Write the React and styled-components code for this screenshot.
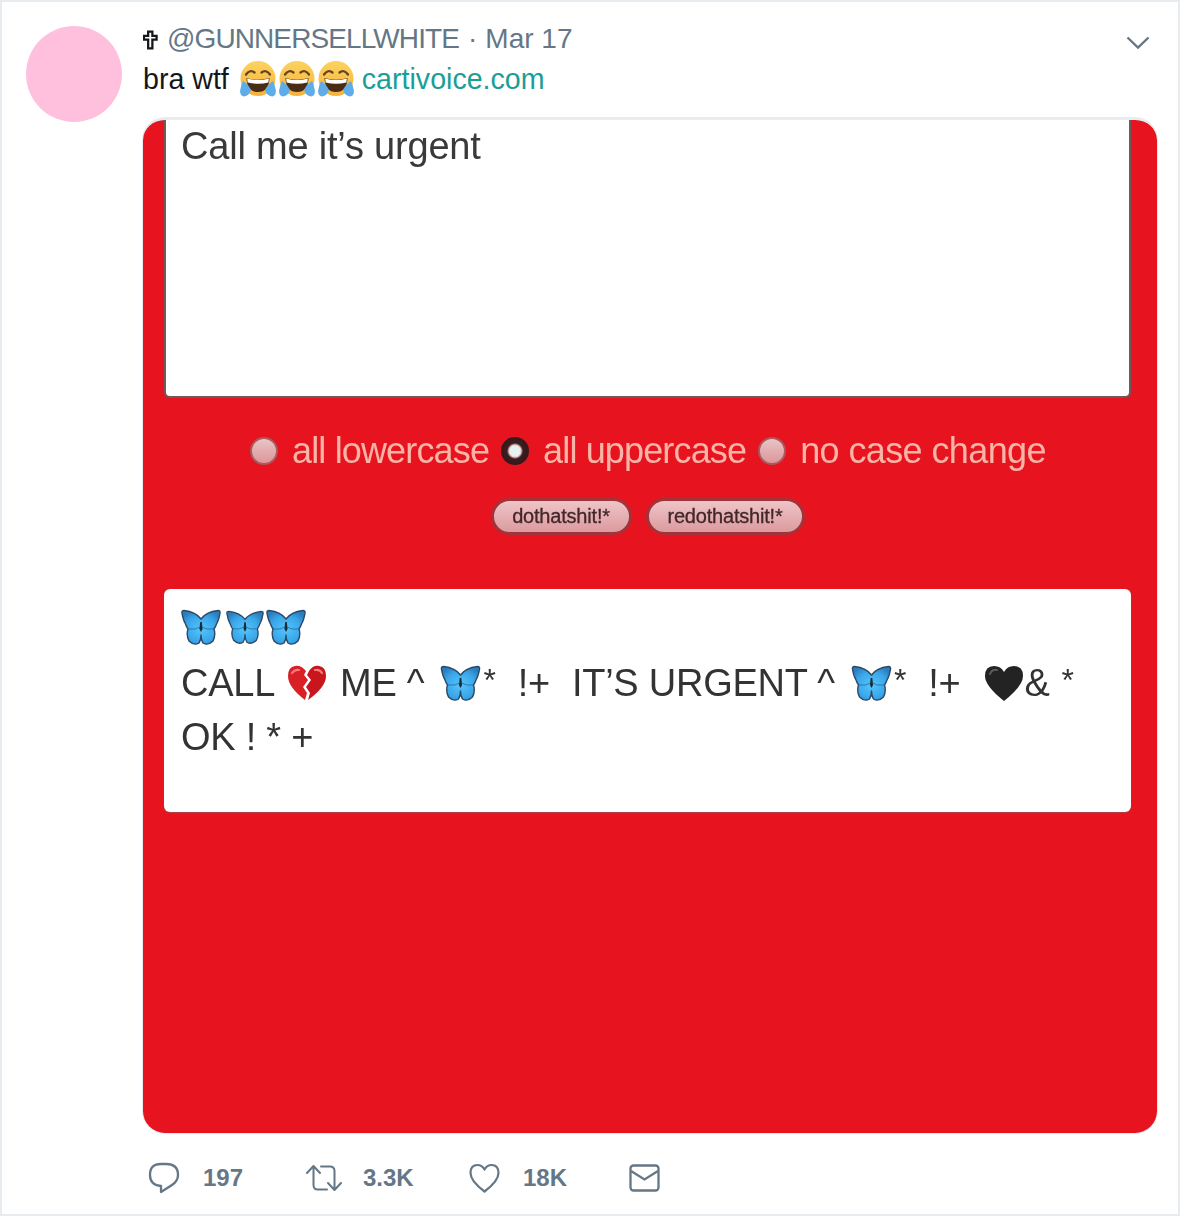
import React from 'react';
import styled, { createGlobalStyle } from 'styled-components';

const GlobalStyle = createGlobalStyle`
  html, body {
    margin: 0;
    padding: 0;
    background: #fff;
  }
  * {
    box-sizing: border-box;
  }
`;

const Joy = ({ id }) => (
  <EmojiSvg $w={36} $h={36} $mr={3} viewBox="0 0 36 36">
    <defs>
      <linearGradient id={id} x1="0" y1="0" x2="0" y2="1">
        <stop offset="0" stopColor="#fcd35f" />
        <stop offset="1" stopColor="#f5b23c" />
      </linearGradient>
    </defs>
    <circle cx="18" cy="17.5" r="17.5" fill={`url(#${id})`} />
    <path d="M6 13.5 Q10 8 14.5 11.5" fill="none" stroke="#664421" strokeWidth="2.3" strokeLinecap="round" />
    <path d="M21.5 11.5 Q26 8 30 13.5" fill="none" stroke="#664421" strokeWidth="2.3" strokeLinecap="round" />
    <path d="M6.5 17 Q18 20.5 29.5 17 Q29 31 18 31 Q7 31 6.5 17 Z" fill="#4a2c14" />
    <path d="M7.2 17.4 Q18 20.8 28.8 17.4 L28.4 21.5 Q18 24 7.6 21.5 Z" fill="#fff" />
    <path d="M3 20 Q8 23 11 29 Q9 35 3.5 35.5 Q-0.5 34 0.2 29 Q1 24 3 20 Z" fill="#5fade8" />
    <path d="M33 20 Q28 23 25 29 Q27 35 32.5 35.5 Q36.5 34 35.8 29 Q35 24 33 20 Z" fill="#5fade8" />
  </EmojiSvg>
);

const Butterfly = ({ id, w = 40, h = 36, mr = 0 }) => (
  <EmojiSvg $w={w} $h={h} $mr={mr} viewBox="0 0 40 36">
    <defs>
      <radialGradient id={id} cx="0.5" cy="0.55" r="0.6">
        <stop offset="0" stopColor="#54c6fa" />
        <stop offset="0.65" stopColor="#3aa6ea" />
        <stop offset="1" stopColor="#2b7dbd" />
      </radialGradient>
    </defs>
    <path
      d="M3 1.5 Q15 3 20 10 Q25 3 37 1.5 Q39.5 1.5 39 4 Q38 11 35.5 15 Q34.5 18 33 20 Q35 26 32 32 Q27 37 22 34 Q20 31 20 26 Q20 31 18 34 Q13 37 8 32 Q5 26 7 20 Q5.5 18 4.5 15 Q2 11 1 4 Q0.5 1.5 3 1.5 Z"
      fill={`url(#${id})`}
      stroke="#2b4a66"
      strokeWidth="1.4"
      strokeLinejoin="round"
    />
    <path d="M19.2 13 h1.6 l0.8 7 l-1.6 3 l-1.6 -3 Z" fill="#1a2c3c" />
    <path d="M7 20 Q15 21 19 18 M33 20 Q25 21 21 18" fill="none" stroke="#23689c" strokeWidth="0.8" />
  </EmojiSvg>
);

const BrokenHeart = () => (
  <EmojiSvg $w={40} $h={36} $mr={13} viewBox="0 0 40 36">
    <path d="M19 6 Q14 0 8 1 Q1 2 1 11 Q1 22 18 35 L20 28 L16 22 L21 15 L17 10 Z" fill="#d92027" />
    <path d="M22 6 Q26 0 32 1 Q39 2 39 11 Q39 22 21 35 L23 28 L19 22 L24 15 L20 10 Z" fill="#c9161d" />
    <path d="M5 8 Q8 4 12 5" fill="none" stroke="#f47b7b" strokeWidth="2.2" strokeLinecap="round" />
    <path d="M28 5 Q33 4 35 8" fill="none" stroke="#f47b7b" strokeWidth="2.2" strokeLinecap="round" />
  </EmojiSvg>
);

const BlackHeart = () => (
  <EmojiSvg $w={40} $h={37} viewBox="0 0 40 37">
    <path d="M20 36 Q1 21 1 11 Q1 1 10 1 Q17 1 20 7 Q23 1 30 1 Q39 1 39 11 Q39 21 20 36 Z" fill="#232323" />
    <path d="M6 9 Q8 4 13 5" fill="none" stroke="#5b5b5b" strokeWidth="2" strokeLinecap="round" />
  </EmojiSvg>
);

const Radio = ({ checked }) => <RadioDot $checked={checked} />;

const App = () => (
  <Frame>
    <GlobalStyle />
    <Avatar />
    <Body>
      <TopLine>
        <CrossIcon viewBox="0 0 16 20">
          <path
            d="M5.5 1 H10 V5.5 H14.5 V9.5 H10 V19 H5.5 V9.5 H1 V5.5 H5.5 Z"
            fill="#fff"
            stroke="#14171a"
            strokeWidth="2.4"
          />
        </CrossIcon>
        <Handle>@GUNNERSELLWHITE</Handle>
        <Dot>·</Dot>
        <span>Mar 17</span>
        <Chevron viewBox="0 0 24 14">
          <path d="M1.5 1.5 L12 11.5 L22.5 1.5" fill="none" stroke="#657786" strokeWidth="2.4" />
        </Chevron>
      </TopLine>
      <TweetText>
        <span>bra wtf</span>
        <JoyRow>
          <Joy id="joy1" />
          <Joy id="joy2" />
          <Joy id="joy3" />
        </JoyRow>
        <Link>cartivoice.com</Link>
      </TweetText>

      <Media>
        <InputPanel>
          <InputText>Call me it’s urgent</InputText>
        </InputPanel>

        <Options>
          <Radio />
          <OptionLabel>all lowercase</OptionLabel>
          <Radio checked />
          <OptionLabel>all uppercase</OptionLabel>
          <Radio />
          <OptionLabel $wide>no case change</OptionLabel>
        </Options>

        <Buttons>
          <PillButton $w={141}>dothatshit!*</PillButton>
          <PillButton $w={159}>redothatshit!*</PillButton>
        </Buttons>

        <OutputPanel>
          <ButterflyRow>
            <Butterfly id="b1" w={40} h={36} mr={5} />
            <Butterfly id="b2" w={38} h={36} mr={2} />
            <Butterfly id="b3" w={40} h={36} />
          </ButterflyRow>
          <OutputLine>
            <Gap $w={12}>CALL</Gap>
            <BrokenHeart />
            <Gap $w={16}>ME ^</Gap>
            <Butterfly id="b4" w={41} h={36} />
            <Star $mr={22}>*</Star>
            <Gap $w={22}>!+</Gap>
            <Gap $w={16}>IT’S URGENT ^</Gap>
            <Butterfly id="b5" w={41} h={36} />
            <Star $mr={22}>*</Star>
            <Gap $w={24}>!+</Gap>
            <BlackHeart />
            <Gap $w={10}>&amp;</Gap>
            <Star>*</Star>
          </OutputLine>
          <OutputLine>OK ! * +</OutputLine>
        </OutputPanel>
      </Media>

      <Actions>
        <Action $w={158} $gap={23}>
          <ActionIcon $w={32} $h={32} viewBox="0 0 32 32">
            <path
              d="M13 2 H18 Q30 2 30 13 Q30 19 24 23 L13 30 V24 Q2 23 2 13 Q2 2 13 2 Z"
              fill="none"
              stroke="#657786"
              strokeWidth="2.3"
              strokeLinejoin="round"
            />
          </ActionIcon>
          <Count>197</Count>
        </Action>
        <Action $w={163} $gap={21}>
          <ActionIcon $w={36} $h={28} viewBox="0 0 36 28">
            <path
              d="M1 9 L7.5 2 L14 9 M7.5 2.5 V21 Q7.5 25.5 12 25.5 H21"
              fill="none"
              stroke="#657786"
              strokeWidth="2"
              strokeLinecap="round"
              strokeLinejoin="round"
            />
            <path
              d="M35 19 L28.5 26 L22 19 M28.5 25.5 V7 Q28.5 2.5 24 2.5 H15"
              fill="none"
              stroke="#657786"
              strokeWidth="2"
              strokeLinecap="round"
              strokeLinejoin="round"
            />
          </ActionIcon>
          <Count>3.3K</Count>
        </Action>
        <Action $w={160} $gap={23}>
          <ActionIcon $w={31} $h={30} viewBox="0 0 31 30">
            <path
              d="M15.5 28.5 Q1.5 18 1.5 10 Q1.5 2 8.5 2 Q13 2 15.5 6.5 Q18 2 22.5 2 Q29.5 2 29.5 10 Q29.5 18 15.5 28.5 Z"
              fill="none"
              stroke="#657786"
              strokeWidth="2.2"
              strokeLinejoin="round"
            />
          </ActionIcon>
          <Count>18K</Count>
        </Action>
        <Action $w={31} $gap={0}>
          <ActionIcon $w={31} $h={28} viewBox="0 0 31 28">
            <rect x="1.5" y="1.5" width="28" height="25" rx="3" fill="none" stroke="#657786" strokeWidth="2.3" />
            <path d="M2 7 L15.5 15.5 L29 7" fill="none" stroke="#657786" strokeWidth="2.3" />
          </ActionIcon>
        </Action>
      </Actions>
    </Body>
  </Frame>
);

const Frame = styled.div`
  width: 1180px;
  height: 1216px;
  border: 2px solid #e6ecf0;
  padding: 24px 21px 0 24px;
  display: flex;
  gap: 21px;
  background: #fff;
  font-family: 'Liberation Sans', Arial, sans-serif;
  overflow: hidden;
`;

const Avatar = styled.div`
  width: 96px;
  height: 96px;
  flex: none;
  border-radius: 50%;
  background: #ffc0dd;
`;

const Body = styled.div`
  flex: 1;
  min-width: 0;
  display: flex;
  flex-direction: column;
`;

const TopLine = styled.div`
  display: flex;
  align-items: center;
  height: 26px;
  color: #657786;
  font-size: 28px;
`;

const CrossIcon = styled.svg`
  flex: none;
  width: 15px;
  height: 20px;
  margin-right: 9px;
  margin-top: 2px;
`;

const Handle = styled.span`
  letter-spacing: -0.9px;
`;

const Dot = styled.span`
  margin: 0 8px 0 9px;
`;

const Chevron = styled.svg`
  width: 24px;
  height: 14px;
  margin-left: auto;
  margin-right: 7px;
  margin-top: 8px;
`;

const TweetText = styled.div`
  display: flex;
  align-items: center;
  height: 38px;
  margin-top: 8px;
  font-size: 28.6px;
  color: #14171a;
`;

const JoyRow = styled.span`
  display: inline-flex;
  margin: 0 5px 0 11px;
`;

const EmojiSvg = styled.svg`
  display: inline-block;
  flex: none;
  width: ${(p) => p.$w}px;
  height: ${(p) => p.$h}px;
  margin-right: ${(p) => p.$mr || 0}px;
`;

const Link = styled.span`
  color: #1b9e95;
`;

const Media = styled.div`
  margin-top: 20px;
  width: 1014px;
  height: 1015px;
  flex: none;
  border-radius: 22px;
  border-top: 2px solid #e6ecf0;
  box-shadow: 0 0 0 1px #e6ecf0;
  background: #e7141f;
  padding: 0 26px 0 21px;
  display: flex;
  flex-direction: column;
  overflow: hidden;
`;

const InputPanel = styled.div`
  height: 278px;
  flex: none;
  background: #fff;
  border-radius: 0 0 6px 6px;
  border: 2px solid #6d5a5c;
  border-top: none;
  padding: 2px 15px;
`;

const InputText = styled.div`
  font-size: 38px;
  line-height: 48px;
  letter-spacing: -0.2px;
  color: #3a3a3a;
  filter: blur(0.4px);
`;

const Options = styled.div`
  display: flex;
  align-items: center;
  justify-content: center;
  height: 40px;
  margin-top: 33px;
  padding-left: 13px;
`;

const RadioDot = styled.span`
  flex: none;
  width: 28px;
  height: 28px;
  border-radius: 50%;
  background: ${(p) =>
    p.$checked
      ? 'radial-gradient(circle, #e6f2f0 0 5px, #f0c6c6 6px, #3b1d20 8px, #2b1518 100%)'
      : 'linear-gradient(#e8c4c6, #dd9699)'};
  border: ${(p) => (p.$checked ? '0' : '2px solid #a85a5e')};
  filter: blur(0.5px);
`;

const OptionLabel = styled.span`
  font-size: 36px;
  letter-spacing: ${(p) => (p.$wide ? '-0.6px' : '-0.85px')};
  color: #f9b4a8;
  margin: 0 12px 0 14px;
  filter: blur(0.4px);
  white-space: nowrap;
`;

const Buttons = styled.div`
  display: flex;
  justify-content: center;
  gap: 14px;
  margin-top: 27px;
`;

const PillButton = styled.div`
  width: ${(p) => p.$w}px;
  height: 37px;
  border-radius: 19px;
  border: 3px solid #a2333a;
  background: linear-gradient(#eec5c8, #dc9a9e);
  display: flex;
  align-items: center;
  justify-content: center;
  font-size: 20px;
  letter-spacing: -0.2px;
  color: #41262a;
  -webkit-text-stroke: 0.3px #41262a;
  filter: blur(0.4px);
`;

const OutputPanel = styled.div`
  height: 223px;
  flex: none;
  margin-top: 54px;
  background: #fff;
  border-radius: 6px;
  box-shadow: 0 1px 1px #a5454b;
  padding: 20px 17px 0;
`;

const ButterflyRow = styled.div`
  display: flex;
  height: 47px;
`;

const OutputLine = styled.div`
  display: flex;
  align-items: center;
  height: 54px;
  font-size: 38px;
  letter-spacing: -0.25px;
  color: #333;
  white-space: pre;
  filter: blur(0.4px);
`;

const Gap = styled.span`
  margin-right: ${(p) => p.$w}px;
`;

const Star = styled.span`
  font-size: 32px;
  margin-left: 2px;
  margin-bottom: 6px;
  margin-right: ${(p) => p.$mr || 0}px;
`;

const Actions = styled.div`
  display: flex;
  align-items: center;
  margin-top: 29px;
  padding-left: 5px;
`;

const Action = styled.div`
  flex: none;
  width: ${(p) => p.$w}px;
  display: flex;
  align-items: center;
  gap: ${(p) => p.$gap}px;
`;

const ActionIcon = styled.svg`
  flex: none;
  width: ${(p) => p.$w}px;
  height: ${(p) => p.$h}px;
`;

const Count = styled.span`
  font-size: 24px;
  font-weight: 700;
  color: #657786;
`;

export default App;
